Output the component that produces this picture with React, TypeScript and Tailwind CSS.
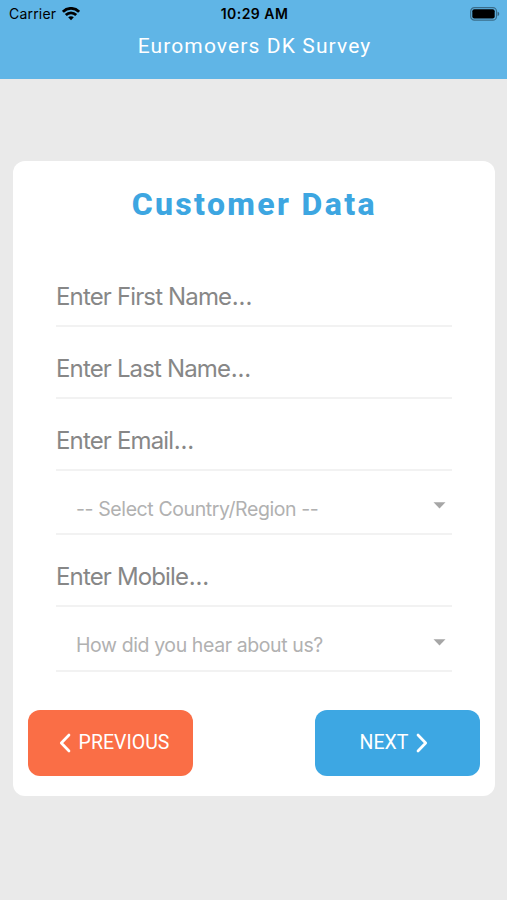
function TextField({ label }: { label: string }) {
  return (
    <div className="flex h-[72px] items-center border-b-2 border-[#f2f2f2] pt-[14px] font-['Inter',sans-serif] text-[24px] text-[#878787]">
      <span className="tracking-[-0.85px] whitespace-pre">
        {label}
        <span className="ml-[0.5px] tracking-[-0.1px]">...</span>
      </span>
    </div>
  );
}

function SelectField({ label, height }: { label: string; height: string }) {
  return (
    <div className={`flex items-center justify-between border-b-2 border-[#f2f2f2] pr-[6px] pl-5 pt-[15px] font-['Inter',sans-serif] text-[19.5px] text-[#b1b1b1] ${height}`}>
      <span className="tracking-[-0.4px] whitespace-pre">{label}</span>
      <svg className="mb-[8px]" width="13" height="7" viewBox="0 0 13 7" fill="#a6a6a6">
        <path d="M0.5 0.3H12.5L6.5 6.5Z" />
      </svg>
    </div>
  );
}

function Chevron({ d }: { d: string }) {
  return (
    <svg width="12" height="20" viewBox="0 0 12 20" fill="none" stroke="white" strokeWidth="2.7" strokeLinecap="round" strokeLinejoin="round">
      <path d={d} />
    </svg>
  );
}

export default function App() {
  return (
    <div className="flex h-[900px] w-[507px] flex-col bg-[#eaeaea]">
      <header className="h-[79px] bg-[#60b5e6]">
        <div className="grid h-[27px] grid-cols-3 items-center pr-[7px] pl-[9px] font-['Inter',sans-serif] text-[14px] text-black">
          <div className="flex items-center gap-[6px]">
            <span className="tracking-[0.2px]">Carrier</span>
            <svg width="18" height="14" viewBox="0 0 18 14" fill="none" stroke="black" strokeWidth="2.8">
              <path d="M0.9 4.8C5.5 0.2 12.5 0.2 17.1 4.8" />
              <path d="M3.8 8C6.8 5.1 11.2 5.1 14.2 8" />
              <path d="M6.2 10.3C7.8 8.8 10.2 8.8 11.8 10.3L9 13.2Z" fill="black" stroke="none" />
            </svg>
          </div>
          <div className="text-center font-semibold tracking-[0.45px] whitespace-pre">10:29 AM</div>
          <svg className="justify-self-end" width="30" height="14" viewBox="0 0 30 14">
            <rect x="0.7" y="0.7" width="25.8" height="12.4" rx="3.7" fill="none" stroke="#000" strokeOpacity="0.4" strokeWidth="1.2" />
            <rect x="2.3" y="2.3" width="22.4" height="9.2" rx="2" fill="#000" />
            <path d="M27.6 4.8C29.8 5.5 29.8 8.4 27.6 9.1Z" fill="#000" fillOpacity="0.45" />
          </svg>
        </div>
        <h1 className="pt-[5px] pl-[2px] text-center font-['Roboto',sans-serif] text-[21px] leading-7 tracking-[1.12px] text-white">Euromovers DK Survey</h1>
      </header>

      <main className="mr-[12.5px] ml-[13px] mt-[82px] flex h-[635px] flex-col rounded-[12px] bg-white">
        <h2 className="pt-[23px] pl-px text-center font-['Roboto',sans-serif] text-[32px] leading-10 font-extrabold tracking-[2.35px] text-[#3da6e1]">Customer Data</h2>
        <form className="mx-[43px] mt-[31px] flex flex-col">
          <TextField label="Enter First Name" />
          <TextField label="Enter Last Name" />
          <TextField label="Enter Email" />
          <SelectField label="-- Select Country/Region --" height="h-[64px]" />
          <TextField label="Enter Mobile" />
          <SelectField label="How did you hear about us?" height="h-[65px]" />
        </form>
        <div className="mt-[38px] flex justify-between px-[15px] font-['Roboto',sans-serif] text-[19.5px] text-white">
          <button className="flex h-[66px] w-[165px] items-center justify-center gap-[8px] rounded-[12px] bg-[#fa6e46] pb-px pl-[7px]">
            <Chevron d="M10 2L2.3 10L10 18" />
            <span>PREVIOUS</span>
          </button>
          <button className="flex h-[66px] w-[165px] items-center justify-center gap-[8px] rounded-[12px] bg-[#3da7e3] pr-[6px] pb-px">
            <span>NEXT</span>
            <Chevron d="M2 2L9.7 10L2 18" />
          </button>
        </div>
      </main>
    </div>
  );
}
